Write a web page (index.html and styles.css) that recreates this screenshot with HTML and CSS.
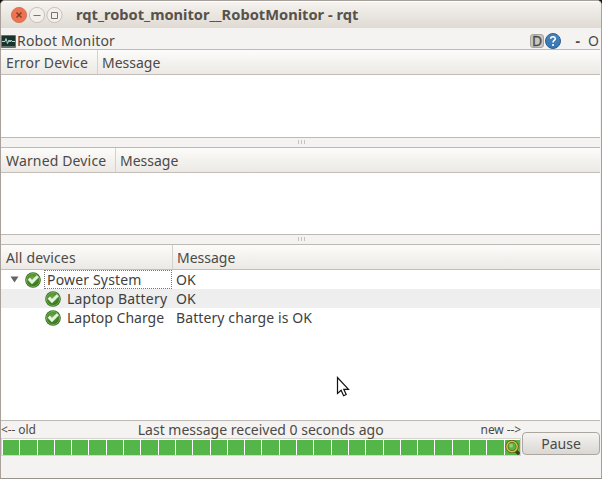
FILE: index.html
```html
<!DOCTYPE html>
<html lang="en">
<head>
<meta charset="utf-8">
<title>rqt_robot_monitor__RobotMonitor - rqt</title>
<link rel="stylesheet" href="styles.css">
</head>
<body>
<svg width="0" height="0" class="defs">
  <defs>
    <radialGradient id="green" cx=".45" cy=".35" r=".65"><stop offset="0" stop-color="#6cac45"/><stop offset="1" stop-color="#2f7018"/></radialGradient>
    <linearGradient id="blue" x2="0" y2="1"><stop offset="0" stop-color="#4a83bb"/><stop offset="1" stop-color="#3276b5"/></linearGradient>
    <symbol id="ok" viewBox="0 0 16 16">
      <circle cx="8" cy="8" r="7.8" fill="#35701f"/>
      <circle cx="8" cy="8" r="6.5" fill="url(#green)" stroke="#8aba6d" stroke-width=".8"/>
      <path d="M3.8 6.6 7 10 12.8 4.2" fill="none" stroke="#e6f1df" stroke-width="3"/>
    </symbol>
  </defs>
</svg>
<div class="window">
  <header class="titlebar">
    <svg class="controls" width="54" height="18" viewBox="0 0 54 18">
      <circle cx="9" cy="9" r="7.6" fill="#ef7350" stroke="#c9694b" stroke-width=".8"/>
      <path d="m6.5 6.5 5 5m0-5-5 5" stroke="#7d3f2d" stroke-width="1.5"/>
      <circle cx="27" cy="9" r="7.6" fill="#f3f0ec" stroke="#bdb7af" stroke-width=".8"/>
      <path d="M23.500 9.500h7" stroke="#79736c"/>
      <circle cx="44.500" cy="9" r="7.6" fill="#f3f0ec" stroke="#bdb7af" stroke-width=".8"/>
      <path d="M41.500 6.500h6v6h-6z" fill="none" stroke="#79736c"/>
    </svg>
    <h1>rqt_robot_monitor__RobotMonitor - rqt</h1>
  </header>
  <div class="dock">
    <svg width="15" height="13" viewBox="0 0 15 13">
      <rect width="15" height="13" rx="1" fill="#68736f"/><rect x="1" y="1" width="13" height="10" fill="#17342f"/>
      <path d="M1 6.5h3l1-3 1.500 5L8 5l1 2 1-2 1 1.500h3" fill="none" stroke="#b7d9cd"/>
    </svg>
    <span class="dock-name">Robot Monitor</span>
    <span class="dbtn">D</span>
    <svg class="help" width="16" height="16" viewBox="0 0 16 16">
      <circle cx="8" cy="8" r="7.5" fill="url(#blue)" stroke="#315f8e"/>
      <path d="M5.700 5.700C5.800 3 10.400 3.200 10.300 5.800 10.200 7.500 8 7.500 8 9.600M8 11v2" fill="none" stroke="#fff" stroke-width="1.6"/>
    </svg>
    <b class="dash">-</b><span class="float">O</span>
  </div>
  <section class="pane errors">
    <div class="head"><span class="c1 t-error">Error Device</span><span class="t-msg">Message</span></div>
  </section>
  <div class="splitter"><i></i><i></i><i></i></div>
  <section class="pane warns">
    <div class="head"><span class="c1 t-warn">Warned Device</span><span class="t-msg">Message</span></div>
  </section>
  <div class="splitter"><i></i><i></i><i></i></div>
  <section class="pane all">
    <div class="head"><span class="c1 t-all">All devices</span><span class="t-msg">Message</span></div>
    <div class="row"><div class="tree top"><svg width="9" height="7" viewBox="0 0 9 7" class="arrow"><path d="M.5.5h8l-4 6z" fill="#66645f"/></svg><svg class="icon" width="16" height="16"><use href="#ok"/></svg><span class="label focus">Power System</span></div><span class="t-ok">OK</span></div>
    <div class="row alt"><div class="tree"><svg class="icon" width="16" height="16"><use href="#ok"/></svg><span class="label t-battery">Laptop Battery</span></div><span class="t-ok">OK</span></div>
    <div class="row"><div class="tree"><svg class="icon" width="16" height="16"><use href="#ok"/></svg><span class="label">Laptop Charge</span></div><span class="t-bat">Battery charge is OK</span></div>
  </section>
  <footer class="bottom">
    <div class="timeline">
      <div class="captions"><small class="old">&lt;-- old</small><span class="last">Last message received 0 seconds ago</span><small class="new">new --&gt;</small></div>
      <div class="bar">
        <i></i><i></i><i></i><i></i><i></i><i></i><i></i><i></i><i></i><i></i><i></i><i></i><i></i><i></i><i></i><i></i><i></i><i></i><i></i><i></i><i></i><i></i><i></i><i></i><i></i><i></i><i></i><i></i><i></i><i class="now"><svg width="15" height="15" viewBox="0 0 16 16"><path d="m10 10 5 5" stroke="#463a1d" stroke-width="3.500"/><circle cx="7.500" cy="7" r="5.600" fill="#59b34d" stroke="#5d611c" stroke-width="3.200"/><circle cx="7.500" cy="7" r="5.500" fill="none" stroke="#d3c83c" stroke-width="1.500"/><circle cx="6.500" cy="6" r="2" fill="#91d26c"/></svg></i>
      </div>
    </div>
    <button type="button"><span>Pause</span></button>
  </footer>
  <svg class="pointer" width="14" height="22" viewBox="0 0 14 22"><path d="M1.500 1.500v16l3.600-3.300 2.500 5.500 2.600-1.200-2.400-5.200h4.700z" fill="#fff" stroke="#111" stroke-width="1.2"/></svg>
</div>
</body>
</html>
```
FILE: styles.css
```css
* { box-sizing: border-box; }
body { margin: 0; background: #15110f; overflow: hidden; }
.defs { position: absolute; }
.window {
  position: relative; width: 602px; height: 479px; display: flex; flex-direction: column;
  background: #f5f3f1; border: 1px solid #a8a19b; border-bottom-color: #99938e; border-radius: 5px 5px 0 0;
  font: 14px/18px "Noto Sans", sans-serif; color: #4b4a47; overflow: hidden; white-space: nowrap;
}
.titlebar { height: 27px; flex: none; display: flex; align-items: center; padding-left: 9px; background: linear-gradient(#f5f3f0, #dfdad2); border-top: 1px solid #fff; }
.controls { flex: none; }
h1 { margin: 0 0 2px 12px; font-size: 14.67px; line-height: 20px; color: #57524c; letter-spacing: 0; }
.dock { height: 21px; flex: none; display: flex; align-items: center; padding-top: 5px; }
.dock > svg { flex: none; }
.dock-name { margin-left: 1px; letter-spacing: .18px; }
.dbtn { margin-left: auto; width: 14px; height: 14px; font-size: 14px; line-height: 12px; text-align: center; display: flex; justify-content: center; -webkit-text-stroke: .3px; background: #cbc7c0; border: 1px solid #aaa69f; border-radius: 3px; }
.help { margin-left: 1px; }
.dash { width: 26px; text-align: right; padding-right: 7px; }
.float { margin: 0 2px 0 1px; }
.pane { flex: none; background: #fff; border: 1px solid #bdb9b4; border-width: 1px 0; margin: 0 1px 0 0; }
.errors { height: 89px; }
.warns { height: 88px; }
.all { height: 177px; }
.head { height: 25px; display: flex; line-height: 25px; background: linear-gradient(#fcfcfa, #ece9e5); border-bottom: 1px solid #c5bdb7; }
.c1 { height: 24px; padding-left: 5px; border-right: 1px solid #d6d1cc; margin-right: 4px; width: 97px; }
.t-error, .t-warn, .t-all { letter-spacing: .15px; }
.warns .c1 { width: 115px; }
.all .c1 { width: 172px; }
.splitter { height: 9px; flex: none; display: flex; justify-content: center; align-items: center; gap: 2px; padding-bottom: 2px; }
.splitter i { width: 1px; height: 4px; background: #c6c3be; }
.row { height: 19px; display: flex; align-items: center; color: #3f3f3d; }
.alt { background: #eee; }
.tree { width: 171px; height: 19px; display: flex; align-items: center; padding-left: 44px; margin-right: 4px; flex: none; }
.top { padding-left: 9px; }
.arrow { margin-right: 6px; }
.icon { flex: none; }
.label { padding-left: 6px; line-height: 19px; }
.t-battery { letter-spacing: .2px; }
.t-bat { letter-spacing: .1px; }
.focus { flex: 1; height: 19px; line-height: 17px; margin-left: 3px; padding-left: 2px; border: 1px dotted #777; letter-spacing: .17px; }
.bottom { flex: 1; display: flex; }
.timeline { width: 520px; flex: none; }
.captions { height: 17px; display: flex; justify-content: space-between; }
small { font-size: 12px; letter-spacing: -.1px; }
.last { margin-left: 5px; }
.bar { height: 18px; display: grid; grid-template-columns: repeat(29, 17.3px) 16px; padding-left: 1px; background: #d6d4d0; border: 1px solid #d6d4d0; border-width: 1px 0; }
.bar i { background: #54b649; border-left: 1px solid #fff; border-top: 1px solid #fff; }
.now svg { display: block; }
button { width: 78px; height: 23px; margin: 11px 0 0 1px; padding: 0; border: 1px solid #aba6a0; border-radius: 4px; background: linear-gradient(#f5f4f2, #dad7d3); font: inherit; line-height: 20px; color: inherit; }
.pointer { position: absolute; left: 335px; top: 375px; }
```
